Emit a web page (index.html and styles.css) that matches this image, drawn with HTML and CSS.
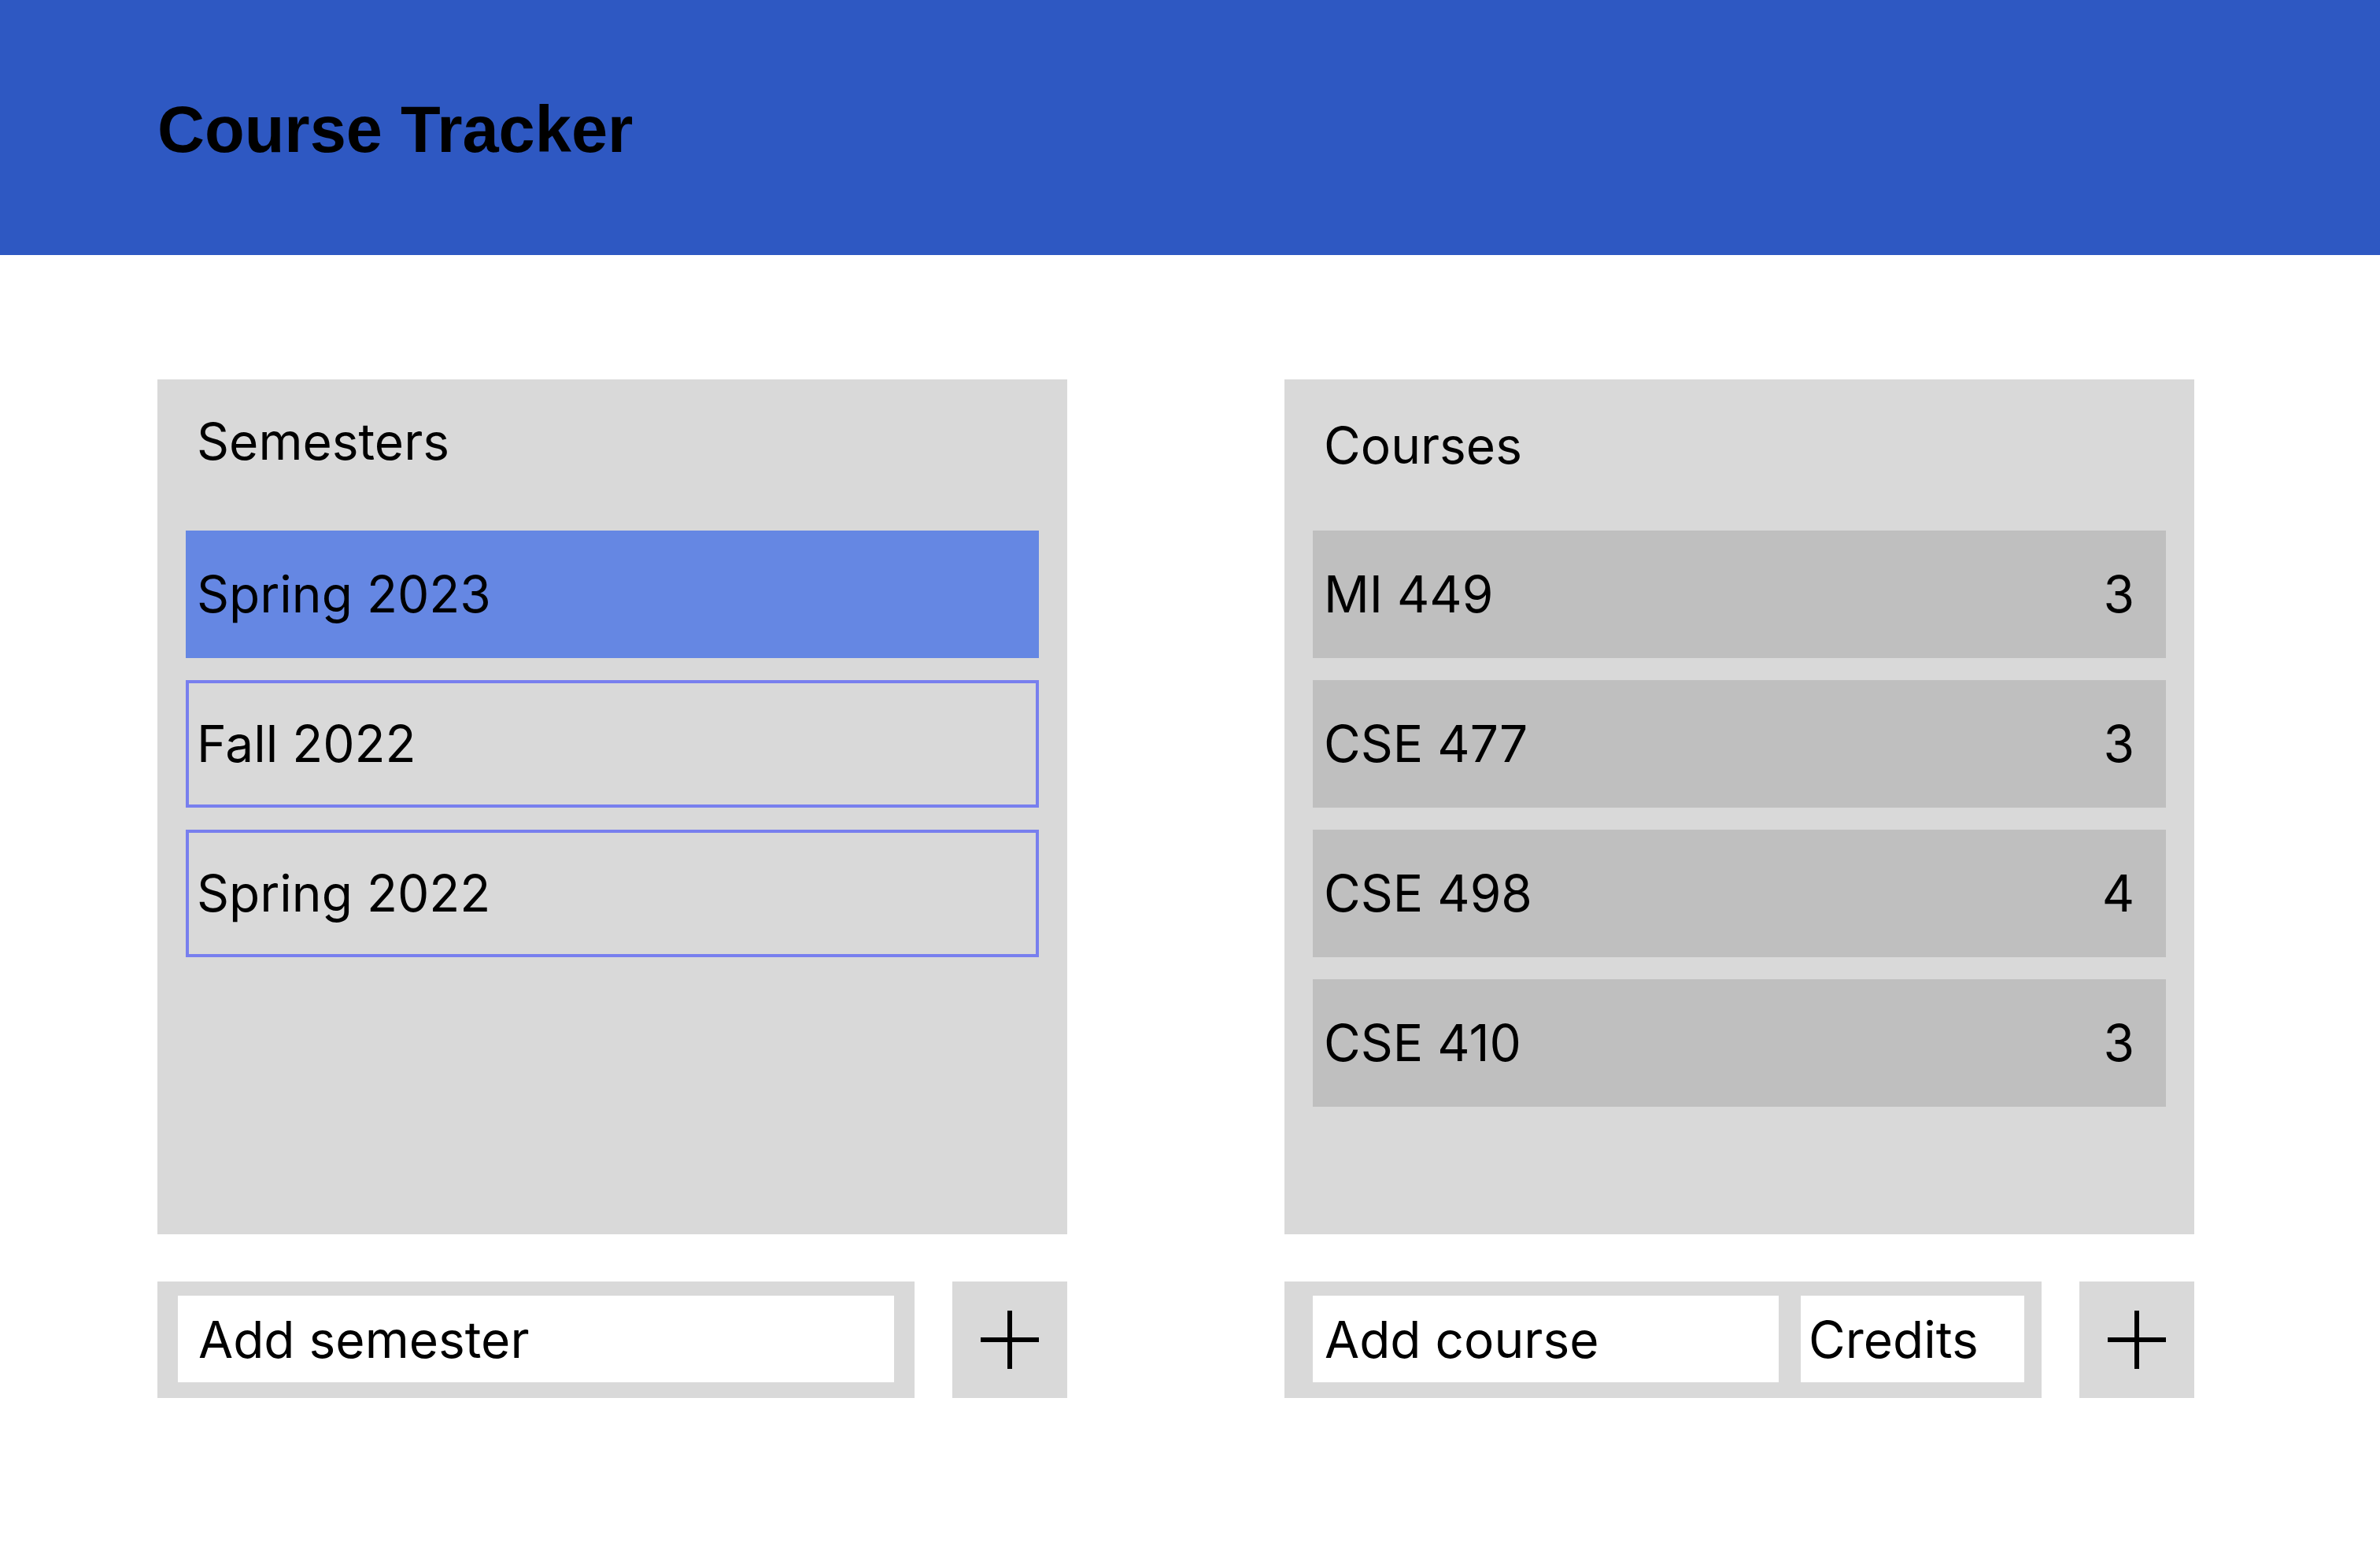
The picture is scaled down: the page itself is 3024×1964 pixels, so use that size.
FILE: index.html
```html
<!DOCTYPE html>
<html lang="en">
<head>
<meta charset="utf-8">
<title>Course Tracker</title>
<link rel="stylesheet" href="styles.css">
</head>
<body>
<header class="topbar">
  <h1 class="title">Course Tracker</h1>
</header>
<main class="content">
  <section class="column">
    <div class="panel">
      <h2 class="panel-title">Semesters</h2>
      <ul class="list">
        <li class="row row-semester row-selected">Spring 2023</li>
        <li class="row row-semester">Fall 2022</li>
        <li class="row row-semester">Spring 2022</li>
      </ul>
    </div>
    <div class="add-row">
      <div class="add-bar add-bar-semester">
        <div class="field field-wide">Add semester</div>
      </div>
      <button class="add-btn" type="button" aria-label="Add semester">
        <svg width="74" height="74" viewBox="0 0 74 74" aria-hidden="true"><rect x="0" y="34" width="74" height="6" fill="#000"/><rect x="34" y="0" width="6" height="74" fill="#000"/></svg>
      </button>
    </div>
  </section>
  <section class="column">
    <div class="panel">
      <h2 class="panel-title panel-title-courses">Courses</h2>
      <ul class="list">
        <li class="row row-course"><span>MI 449</span><span class="credits">3</span></li>
        <li class="row row-course"><span>CSE 477</span><span class="credits">3</span></li>
        <li class="row row-course"><span>CSE 498</span><span class="credits">4</span></li>
        <li class="row row-course"><span>CSE 410</span><span class="credits">3</span></li>
      </ul>
    </div>
    <div class="add-row">
      <div class="add-bar add-bar-course">
        <div class="field field-course">Add course</div>
        <div class="field field-credits">Credits</div>
      </div>
      <button class="add-btn" type="button" aria-label="Add course">
        <svg width="74" height="74" viewBox="0 0 74 74" aria-hidden="true"><rect x="0" y="34" width="74" height="6" fill="#000"/><rect x="34" y="0" width="6" height="74" fill="#000"/></svg>
      </button>
    </div>
  </section>
</main>
</body>
</html>
```
FILE: styles.css
```css
* { box-sizing: border-box; }
html, body { margin: 0; padding: 0; background: #ffffff; }
body {
  font-family: "Inter", "Noto Sans", sans-serif;
  color: #000;
  width: 3024px;
}
.topbar {
  height: 324px;
  background: #2e58c2;
  display: flex;
  align-items: center;
  padding: 4px 0 0 200px;
}
.title {
  margin: 0;
  font-family: "Liberation Sans", Arial, sans-serif;
  font-weight: 700;
  font-size: 83px;
  line-height: 1;
  color: #000;
}
.content {
  display: flex;
  gap: 276px;
  padding: 158px 0 0 200px;
}
.column {
  width: 1156px;
  display: flex;
  flex-direction: column;
  gap: 60px;
}
.panel {
  height: 1086px;
  background: #d9d9d9;
  padding: 47px 36px 0 36px;
}
.panel-title {
  margin: 0 0 81px 14px;
  font-size: 64px;
  font-weight: 400;
  line-height: 64px;
}
.panel-title-courses {
  margin-top: 5px;
  margin-bottom: 76px;
}
.list {
  list-style: none;
  margin: 0;
  padding: 0;
  display: flex;
  flex-direction: column;
  gap: 28px;
}
.row {
  height: 162px;
  display: flex;
  align-items: center;
  font-size: 64px;
  line-height: 64px;
  padding: 0 40px 0 14px;
}
.row-semester {
  border: 4px solid #787fee;
  padding-left: 10px;
}
.row-selected {
  background: #6587e3;
  border-color: #6587e3;
}
.row-course {
  background: #bfbfbf;
  justify-content: space-between;
}
.add-row {
  display: flex;
  gap: 48px;
  height: 148px;
}
.add-bar {
  width: 962px;
  background: #d9d9d9;
  display: flex;
  gap: 28px;
  padding: 18px 26px 20px 26px;
}
.add-bar-course {
  padding-left: 36px;
  padding-right: 22px;
}
.field {
  background: #ffffff;
  display: flex;
  align-items: center;
  font-size: 64px;
  line-height: 64px;
  padding: 2px 0 0 26px;
}
.field-wide { flex: 1; }
.field-course { width: 592px; padding-left: 15px; }
.field-credits { width: 284px; padding-left: 10px; }
.add-btn {
  width: 146px;
  height: 148px;
  border: 0;
  margin: 0;
  padding: 0;
  background: #d9d9d9;
  display: flex;
  align-items: center;
  justify-content: center;
  cursor: pointer;
}
.add-btn svg { display: block; }
```
